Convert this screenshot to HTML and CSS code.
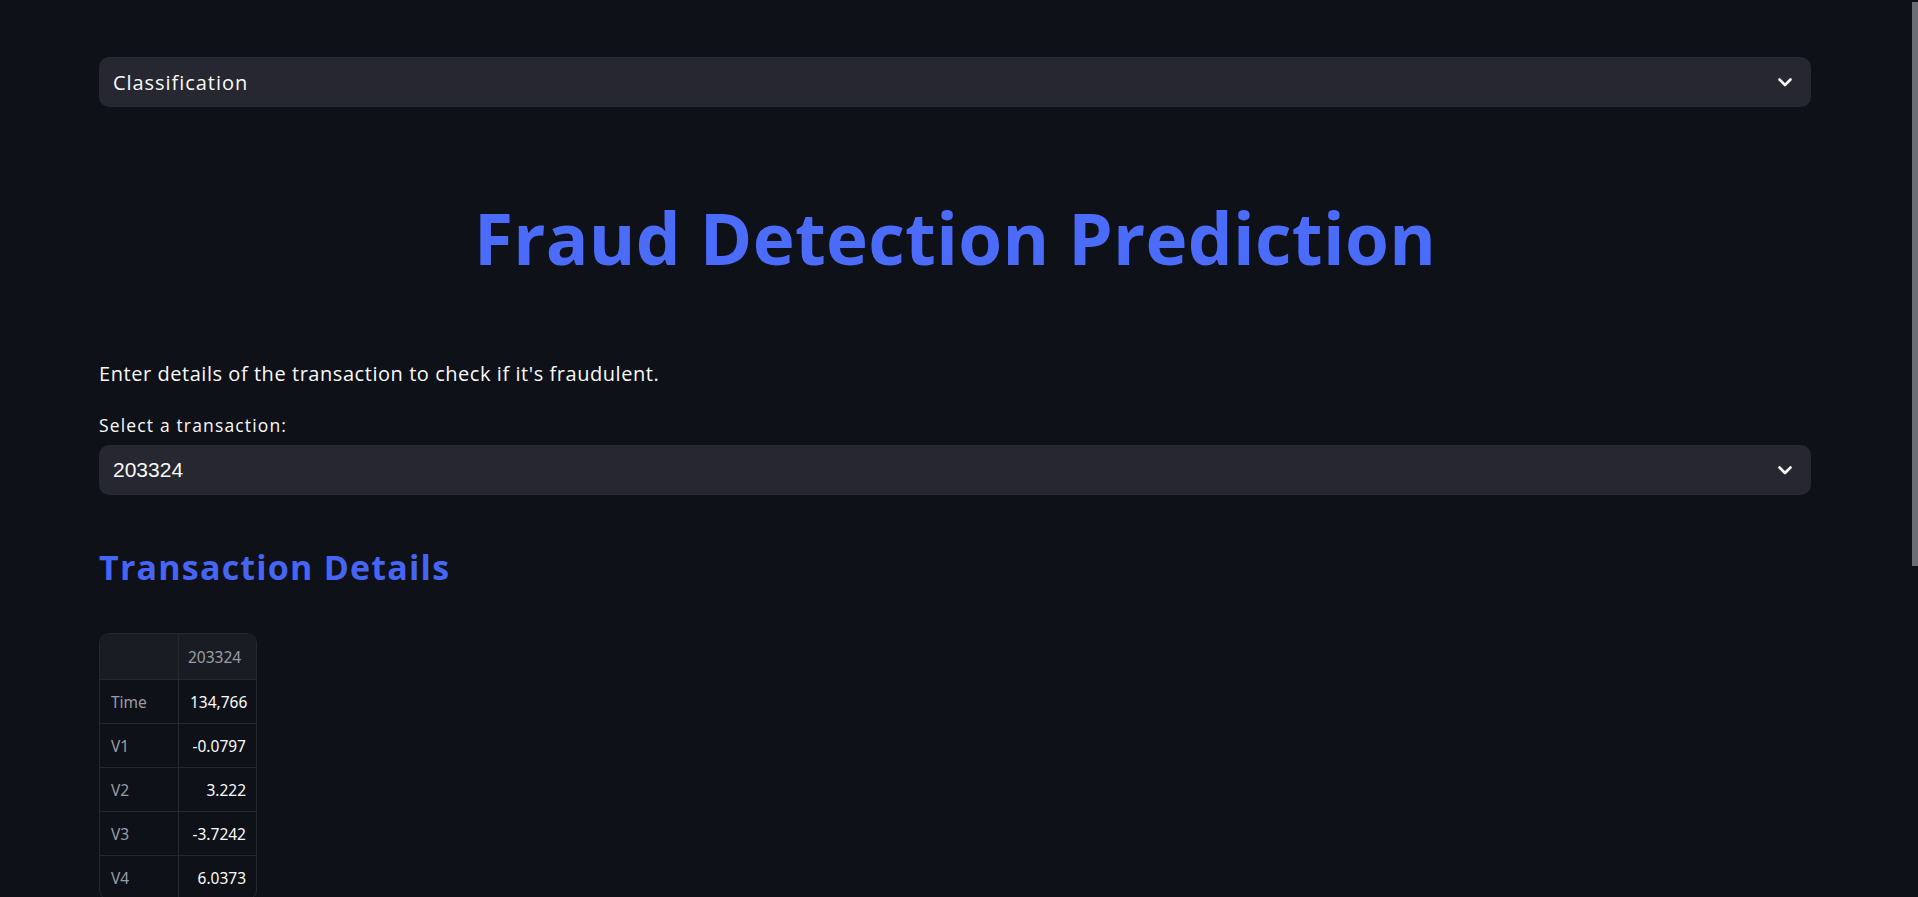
FILE: index.html
```html
<!DOCTYPE html>
<html lang="en">
<head>
<meta charset="utf-8">
<title>Fraud Detection Prediction</title>
<link rel="stylesheet" href="styles.css">
</head>
<body>
<main class="app">
  <div class="select select-top">
    <span class="select-value">Classification</span>
    <svg class="chev" width="14" height="9" viewBox="0 0 14 9"><polyline points="1.5,1.5 7,7 12.5,1.5" fill="none" stroke="#fafafa" stroke-width="2.6" stroke-linecap="round" stroke-linejoin="round"/></svg>
  </div>

  <h1 class="title">Fraud Detection Prediction</h1>

  <p class="intro">Enter details of the transaction to check if it's fraudulent.</p>

  <div class="field">
    <label class="field-label">Select a transaction:</label>
    <div class="select">
      <span class="select-value num">203324</span>
      <svg class="chev" width="14" height="9" viewBox="0 0 14 9"><polyline points="1.5,1.5 7,7 12.5,1.5" fill="none" stroke="#fafafa" stroke-width="2.6" stroke-linecap="round" stroke-linejoin="round"/></svg>
    </div>
  </div>

  <h2 class="subtitle">Transaction Details</h2>

  <div class="grid">
    <div class="row head"><div class="cell idx"></div><div class="cell col">203324</div></div>
    <div class="row"><div class="cell idx">Time</div><div class="cell val">134,766</div></div>
    <div class="row"><div class="cell idx">V1</div><div class="cell val">-0.0797</div></div>
    <div class="row"><div class="cell idx">V2</div><div class="cell val">3.222</div></div>
    <div class="row"><div class="cell idx">V3</div><div class="cell val">-3.7242</div></div>
    <div class="row"><div class="cell idx">V4</div><div class="cell val">6.0373</div></div>
  </div>
</main>
<div class="scrollbar"></div>
</body>
</html>
```

FILE: styles.css
```css
html, body {
  margin: 0;
  padding: 0;
  background: #0e1117;
  height: 897px;
  overflow: hidden;
}

body {
  font-family: "Open Sans", "Noto Sans", sans-serif;
  color: #fafafa;
}

.app {
  display: flex;
  flex-direction: column;
  padding: 57px 107px 0 99px;
}

.select {
  height: 50px;
  background: #262730;
  border-radius: 10px;
  display: flex;
  align-items: center;
  justify-content: space-between;
  padding: 0 19px 0 14px;
  box-sizing: border-box;
}

.select-value {
  font-size: 20px;
  letter-spacing: 0.95px;
  color: #fafafa;
}

.select-value.num {
  font-family: "Liberation Sans", Arial, sans-serif;
  font-size: 21px;
  letter-spacing: 0;
}

.chev {
  display: block;
}

.title {
  margin: 86px 0 0;
  text-align: center;
  font-size: 71px;
  line-height: 90px;
  letter-spacing: 0.3px;
  font-weight: 700;
  color: #4b6bfb;
}

.intro {
  margin: 77px 0 0;
  font-size: 20px;
  line-height: 28px;
  letter-spacing: 0.55px;
}

.field {
  display: flex;
  flex-direction: column;
  gap: 9px;
  margin-top: 26px;
}

.field-label {
  font-size: 17.5px;
  line-height: 22px;
  letter-spacing: 1.15px;
}

.subtitle {
  margin: 50px 0 0;
  font-size: 34px;
  line-height: 44px;
  letter-spacing: 1.2px;
  font-weight: 700;
  color: #4565f5;
}

.grid {
  margin-top: 44px;
  width: 158px;
  box-sizing: border-box;
  border: 1px solid #262730;
  border-radius: 10px;
  overflow: hidden;
  font-family: "Noto Sans", sans-serif;
  font-size: 15.5px;
}

.row {
  display: grid;
  grid-template-columns: 79px 1fr;
  height: 44px;
  border-top: 1px solid #262730;
  box-sizing: border-box;
}

.row.head {
  border-top: none;
  height: 45px;
  background: #1a1c23;
}

.cell {
  display: flex;
  align-items: center;
  padding: 0 11px;
}

.cell.idx {
  color: #9a9ca4;
  border-right: 1px solid #262730;
}

.cell.col {
  color: #9a9ca4;
  padding-left: 9px;
}

.cell.val {
  justify-content: flex-end;
  color: #fafafa;
  padding-right: 10px;
}

.scrollbar {
  position: fixed;
  right: 0;
  top: 2px;
  width: 6px;
  height: 564px;
  background: #6d6e73;
}
```
